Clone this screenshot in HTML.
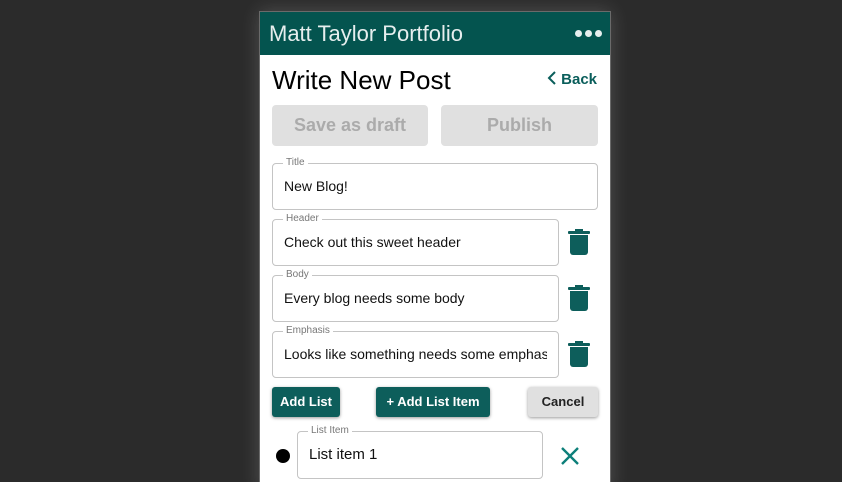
<!DOCTYPE html>
<html><head><style>
*{box-sizing:border-box;margin:0;padding:0}
html,body{width:842px;height:482px;overflow:hidden}
body{background:#2b2b2b;font-family:"Liberation Sans",Roboto,sans-serif;position:relative}
.ph{position:absolute;left:259px;top:11px;width:352px;height:480px;background:#fff;border:1px solid #6a6a6a;box-shadow:0 0 18px rgba(255,255,255,.18)}
.hd{height:43px;background:#04544f;color:#e6eeee;font-size:22px;padding:9px 0 0 9px;position:relative}
.dots{position:absolute;right:8px;top:18px;display:flex;gap:3px}
.dots i{display:block;width:7px;height:7px;border-radius:50%;background:#e6eeee}
.t{position:absolute;left:12px;top:53px;font-size:26px;color:#000}
.back{position:absolute;right:13px;top:59px;font-size:15px;color:#0a5e5b;font-weight:bold}
.gb{position:absolute;top:93px;height:41px;background:#e0e0e0;border-radius:4px;color:#ababab;font-weight:bold;font-size:18px;text-align:center;line-height:41px}
.f{position:absolute;left:12px;height:47px;border:1px solid #c4c4c4;border-radius:4px;font-size:14px;color:#111;padding:14px 11px 0}
.f span{position:absolute;top:-7px;left:10px;background:#fff;padding:0 3px;font-size:10px;color:#777;line-height:12px}
.f div{overflow:hidden;white-space:nowrap}
.trash{position:absolute;left:308px}
.btn{position:absolute;top:375px;height:30px;background:#0d5e5b;color:#fff;font-weight:bold;font-size:13px;border-radius:3px;text-align:center;line-height:30px;box-shadow:0 1px 3px rgba(0,0,0,.4)}
</style></head><body>
<div class="ph">
<div class="hd">Matt Taylor Portfolio<div class="dots"><i></i><i></i><i></i></div></div>
<div class="t">Write New Post</div>
<div class="back"><svg width="10" height="14" viewBox="0 0 10 14" style="vertical-align:-1px;margin-right:4px"><path d="M8 1 2 7l6 6" fill="none" stroke="#0a5e5b" stroke-width="2"/></svg>Back</div>
<div class="gb" style="left:12px;width:156px">Save as draft</div>
<div class="gb" style="left:181px;width:157px">Publish</div>
<div class="f" style="top:151px;width:326px"><span>Title</span>New Blog!</div>
<div class="f" style="top:207px;width:287px"><span>Header</span>Check out this sweet header</div>
<div class="f" style="top:263px;width:287px"><span>Body</span>Every blog needs some body</div>
<div class="f" style="top:319px;width:287px"><span>Emphasis</span><div>Looks like something needs some emphasis</div></div>
<svg class="trash" style="top:217px" width="22" height="26" viewBox="0 0 22 26"><rect x="0" y="2" width="22" height="3" rx="1" fill="#0d5e5b"/><rect x="7" y="0" width="8" height="3" fill="#0d5e5b"/><path d="M2 6h18v17a3 3 0 0 1-3 3H5a3 3 0 0 1-3-3z" fill="#0d5e5b"/></svg>
<svg class="trash" style="top:273px" width="22" height="26" viewBox="0 0 22 26"><rect x="0" y="2" width="22" height="3" rx="1" fill="#0d5e5b"/><rect x="7" y="0" width="8" height="3" fill="#0d5e5b"/><path d="M2 6h18v17a3 3 0 0 1-3 3H5a3 3 0 0 1-3-3z" fill="#0d5e5b"/></svg>
<svg class="trash" style="top:329px" width="22" height="26" viewBox="0 0 22 26"><rect x="0" y="2" width="22" height="3" rx="1" fill="#0d5e5b"/><rect x="7" y="0" width="8" height="3" fill="#0d5e5b"/><path d="M2 6h18v17a3 3 0 0 1-3 3H5a3 3 0 0 1-3-3z" fill="#0d5e5b"/></svg>
<div class="btn" style="left:12px;width:68px">Add List</div>
<div class="btn" style="left:116px;width:114px">+ Add List Item</div>
<div class="btn" style="left:268px;width:70px;background:#e0e0e0;color:#222">Cancel</div>
<div style="position:absolute;left:16px;top:437px;width:14px;height:14px;border-radius:50%;background:#000"></div>
<div class="f" style="left:37px;top:419px;width:246px;height:48px;font-size:15px"><span>List Item</span>List item 1</div>
<svg style="position:absolute;left:300px;top:434px" width="20" height="20" viewBox="0 0 20 20"><path d="M2 2l16 16M18 2 2 18" stroke="#0d7f7a" stroke-width="2.4"/></svg>
</div>
</body></html>
